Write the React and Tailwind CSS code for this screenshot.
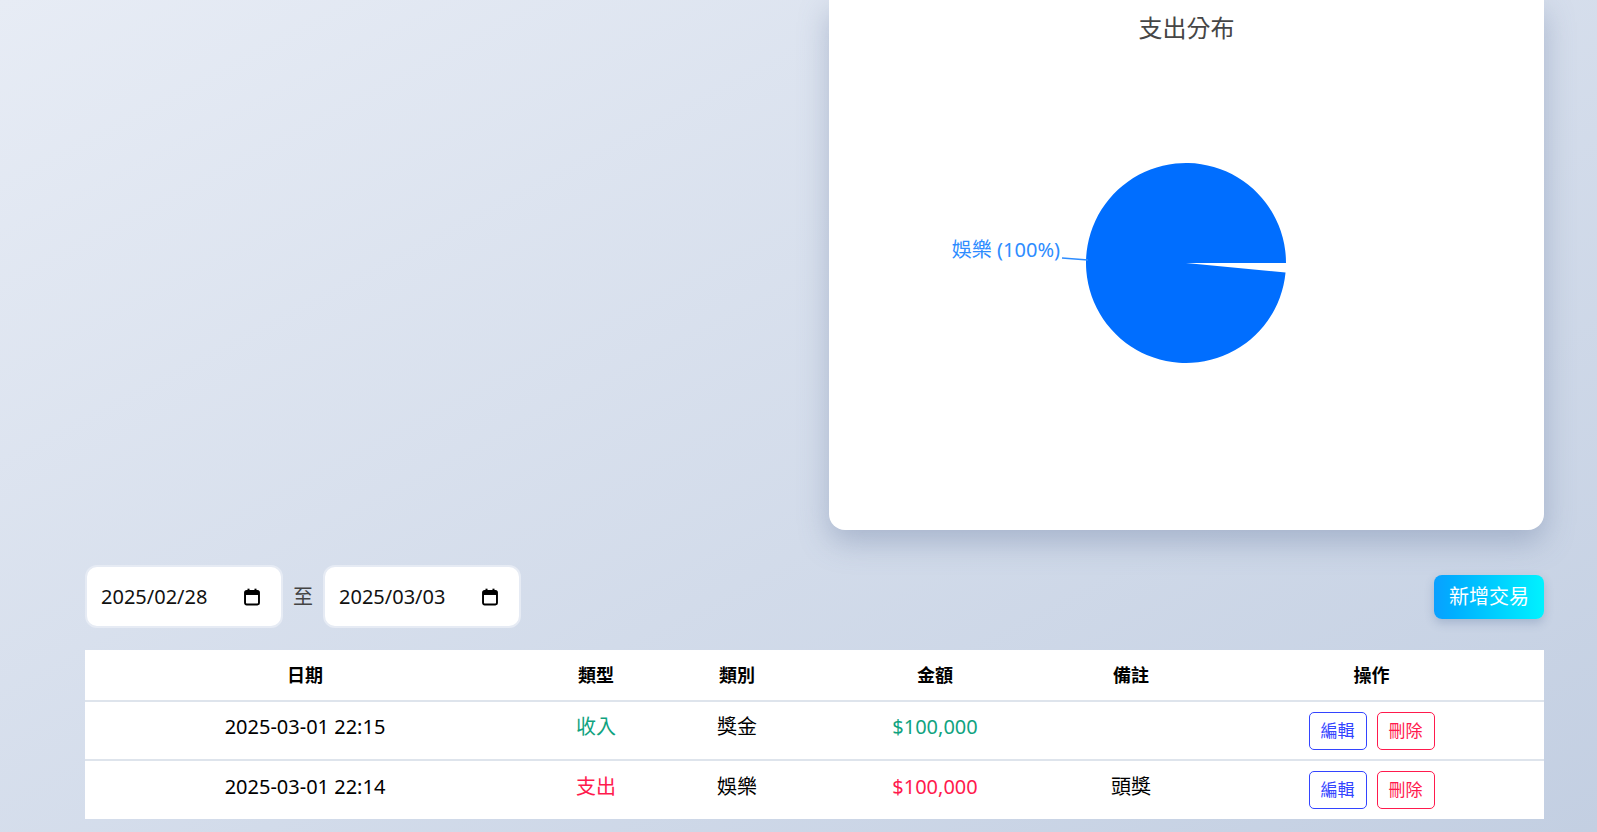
import { useState } from 'react'

const font = { fontFamily: '"Noto Sans", "Noto Sans CJK TC", sans-serif' }

const rows = [
  { date: '2025-03-01 22:15', type: '收入', category: '獎金', amount: '$100,000', note: '' },
  { date: '2025-03-01 22:14', type: '支出', category: '娛樂', amount: '$100,000', note: '頭獎' },
]

function CalendarIcon() {
  return (
    <svg width="18" height="18" viewBox="0 0 16 16" className="text-black">
      <rect x="1.8" y="2.6" width="12.4" height="12" rx="1.4" fill="none" stroke="currentColor" strokeWidth="1.7" />
      <rect x="1.8" y="2.6" width="12.4" height="3.6" fill="currentColor" />
      <rect x="4" y="0.6" width="1.8" height="3" fill="currentColor" />
      <rect x="10.2" y="0.6" width="1.8" height="3" fill="currentColor" />
    </svg>
  )
}

function DateBox({ value }) {
  return (
    <div className="w-[198px] h-[63px] bg-white border-2 border-[#e6ebf4] rounded-xl flex items-center justify-between pl-[14px] pr-[20px]">
      <span className="text-[20px] text-[#111]">{value}</span>
      <CalendarIcon />
    </div>
  )
}

function PieChart() {
  const cx = 357
  const cy = 218
  const r = 100
  const a = (5.5 * Math.PI) / 180
  const x1 = cx + r * Math.cos(a)
  const y1 = cy + r * Math.sin(a)
  return (
    <svg width="715" height="470" className="block">
      <path d={`M ${cx} ${cy} L ${x1} ${y1} A ${r} ${r} 0 1 1 ${cx + r} ${cy} Z`} fill="#006eff" />
      <path d="M 233 213 L 259 215" stroke="#2d8cff" strokeWidth="1.3" fill="none" />
      <text x="231" y="212" textAnchor="end" fontSize="20" fill="#2d8cff" style={font}>
        娛樂 (100%)
      </text>
    </svg>
  )
}

export default function App() {
  const [from] = useState('2025/02/28')
  const [to] = useState('2025/03/03')

  return (
    <div className="min-h-screen bg-linear-to-br from-[#e7ecf5] to-[#c3cfe2] pl-[85px] pr-[53px]" style={font}>
      {/* 上方圖表區 */}
      <div className="grid grid-cols-2 gap-[29px]">
        <div />
        <div className="bg-white rounded-b-2xl shadow-[0_12px_30px_rgba(90,110,150,0.35)] flex flex-col items-center pt-[11px] pb-[15px]">
          <h2 className="text-[24px] leading-[34px] text-[#464646]">支出分布</h2>
          <PieChart />
        </div>
      </div>

      {/* 篩選列 */}
      <div className="flex items-center justify-between mt-[35px]">
        <div className="flex items-center gap-[10px]">
          <DateBox value={from} />
          <span className="text-[20px] text-[#444]">至</span>
          <DateBox value={to} />
        </div>
        <button className="h-[44px] px-[15px] rounded-lg bg-linear-to-r from-[#0aa0ff] to-[#00f2fe] text-white text-[20px] shadow-[0_4px_10px_rgba(60,90,140,0.25)]">
          新增交易
        </button>
      </div>

      {/* 交易表格 */}
      <table className="w-full mt-[22px] bg-white border-collapse text-center">
        <thead>
          <tr className="h-[51px] border-b-2 border-[#dee4ec]">
            <th className="w-[440px] text-[18px] font-bold text-black">日期</th>
            <th className="w-[142px] text-[18px] font-bold text-black">類型</th>
            <th className="w-[140px] text-[18px] font-bold text-black">類別</th>
            <th className="w-[256px] text-[18px] font-bold text-black">金額</th>
            <th className="w-[136px] text-[18px] font-bold text-black">備註</th>
            <th className="text-[18px] font-bold text-black">操作</th>
          </tr>
        </thead>
        <tbody className="text-[20px] text-black">
          {rows.map((r, i) => {
            const income = r.type === '收入'
            const color = income ? 'text-[#10a37f]' : 'text-[#ff1a4d]'
            return (
              <tr key={i} className={`h-[59px] ${i === 0 ? 'border-b-2 border-[#dee4ec]' : ''}`}>
                <td className="pb-[7px]">{r.date}</td>
                <td className={`pb-[7px] ${color}`}>{r.type}</td>
                <td className="pb-[7px]">{r.category}</td>
                <td className={`pb-[7px] ${color}`}>{r.amount}</td>
                <td className="pb-[7px]">{r.note}</td>
                <td>
                  <div className="flex justify-center gap-[10px]">
                    <button className="h-[38px] px-[11px] border border-[#3344ff] text-[#3344ff] rounded-[5px] text-[17px]">編輯</button>
                    <button className="h-[38px] px-[11px] border border-[#ff1a4d] text-[#ff1a4d] rounded-[5px] text-[17px]">刪除</button>
                  </div>
                </td>
              </tr>
            )
          })}
        </tbody>
      </table>
    </div>
  )
}
